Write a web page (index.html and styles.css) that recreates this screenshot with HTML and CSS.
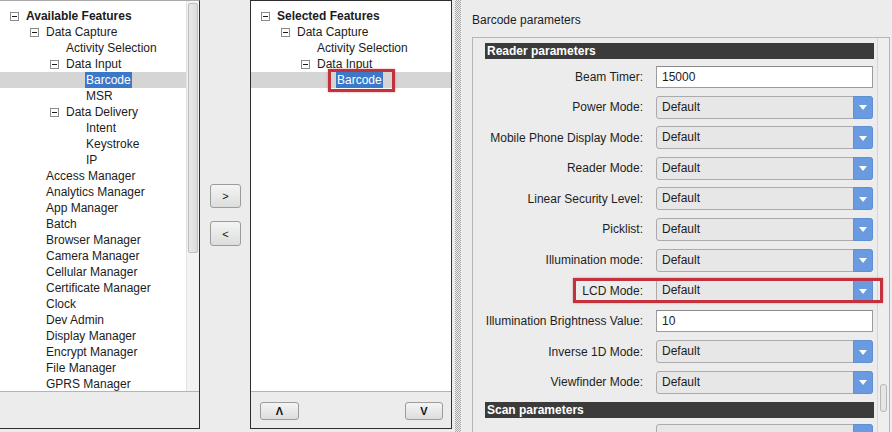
FILE: index.html
```html
<!DOCTYPE html>
<html>
<head>
<meta charset="utf-8">
<link rel="stylesheet" href="styles.css">
</head>
<body>
<div class="app">
  <div class="panel panel-left">
    <div class="tree-wrap">
      <div class="tree">
        <div class="node l0 bold"><svg class="exp" width="9" height="9" viewBox="0 0 9 9"><rect x="0.5" y="0.5" width="8" height="8" fill="#fff" stroke="#8a8a8a"/><path d="M2 4.5h5" stroke="#1a1a1a"/></svg><span class="label">Available Features</span></div>
        <div class="node l1"><svg class="exp" width="9" height="9" viewBox="0 0 9 9"><rect x="0.5" y="0.5" width="8" height="8" fill="#fff" stroke="#8a8a8a"/><path d="M2 4.5h5" stroke="#1a1a1a"/></svg><span class="label">Data Capture</span></div>
        <div class="node l2"><span class="exp"></span><span class="label">Activity Selection</span></div>
        <div class="node l2"><svg class="exp" width="9" height="9" viewBox="0 0 9 9"><rect x="0.5" y="0.5" width="8" height="8" fill="#fff" stroke="#8a8a8a"/><path d="M2 4.5h5" stroke="#1a1a1a"/></svg><span class="label">Data Input</span></div>
        <div class="node l3 sel"><span class="exp"></span><span class="label">Barcode</span></div>
        <div class="node l3"><span class="exp"></span><span class="label">MSR</span></div>
        <div class="node l2"><svg class="exp" width="9" height="9" viewBox="0 0 9 9"><rect x="0.5" y="0.5" width="8" height="8" fill="#fff" stroke="#8a8a8a"/><path d="M2 4.5h5" stroke="#1a1a1a"/></svg><span class="label">Data Delivery</span></div>
        <div class="node l3"><span class="exp"></span><span class="label">Intent</span></div>
        <div class="node l3"><span class="exp"></span><span class="label">Keystroke</span></div>
        <div class="node l3"><span class="exp"></span><span class="label">IP</span></div>
        <div class="node l1"><span class="exp"></span><span class="label">Access Manager</span></div>
        <div class="node l1"><span class="exp"></span><span class="label">Analytics Manager</span></div>
        <div class="node l1"><span class="exp"></span><span class="label">App Manager</span></div>
        <div class="node l1"><span class="exp"></span><span class="label">Batch</span></div>
        <div class="node l1"><span class="exp"></span><span class="label">Browser Manager</span></div>
        <div class="node l1"><span class="exp"></span><span class="label">Camera Manager</span></div>
        <div class="node l1"><span class="exp"></span><span class="label">Cellular Manager</span></div>
        <div class="node l1"><span class="exp"></span><span class="label">Certificate Manager</span></div>
        <div class="node l1"><span class="exp"></span><span class="label">Clock</span></div>
        <div class="node l1"><span class="exp"></span><span class="label">Dev Admin</span></div>
        <div class="node l1"><span class="exp"></span><span class="label">Display Manager</span></div>
        <div class="node l1"><span class="exp"></span><span class="label">Encrypt Manager</span></div>
        <div class="node l1"><span class="exp"></span><span class="label">File Manager</span></div>
        <div class="node l1"><span class="exp"></span><span class="label">GPRS Manager</span></div>
      </div>
      <div class="vscroll-left"><div class="thumb-left"></div></div>
    </div>
    <div class="panel-foot"></div>
  </div>

  <div class="gutter">
    <button class="btn arrow-btn">&gt;</button>
    <button class="btn arrow-btn tall">&lt;</button>
  </div>

  <div class="panel panel-mid">
    <div class="tree-wrap">
      <div class="tree">
        <div class="node l0 bold"><svg class="exp" width="9" height="9" viewBox="0 0 9 9"><rect x="0.5" y="0.5" width="8" height="8" fill="#fff" stroke="#8a8a8a"/><path d="M2 4.5h5" stroke="#1a1a1a"/></svg><span class="label">Selected Features</span></div>
        <div class="node l1"><svg class="exp" width="9" height="9" viewBox="0 0 9 9"><rect x="0.5" y="0.5" width="8" height="8" fill="#fff" stroke="#8a8a8a"/><path d="M2 4.5h5" stroke="#1a1a1a"/></svg><span class="label">Data Capture</span></div>
        <div class="node l2"><span class="exp"></span><span class="label">Activity Selection</span></div>
        <div class="node l2"><svg class="exp" width="9" height="9" viewBox="0 0 9 9"><rect x="0.5" y="0.5" width="8" height="8" fill="#fff" stroke="#8a8a8a"/><path d="M2 4.5h5" stroke="#1a1a1a"/></svg><span class="label">Data Input</span></div>
        <div class="node l3 sel"><span class="exp"></span><span class="label marked">Barcode</span></div>
      </div>
    </div>
    <div class="panel-foot mid-foot">
      <button class="btn move-btn up">&Lambda;</button>
      <button class="btn move-btn down">V</button>
    </div>
  </div>

  <div class="right">
    <div class="splitter"></div>
    <div class="right-content">
      <div class="title">Barcode parameters</div>
      <div class="scrollbox">
        <div class="scroll-content">
          <div class="section">Reader parameters</div>
          <div class="row"><span class="lbl">Beam Timer:</span><div class="input">15000</div></div>
          <div class="row"><span class="lbl">Power Mode:</span><div class="select"><span class="val">Default</span><span class="drop"><svg width="8" height="5" viewBox="0 0 8 5"><path d="M0 0h8L4 5z" fill="#fff"/></svg></span></div></div>
          <div class="row"><span class="lbl">Mobile Phone Display Mode:</span><div class="select"><span class="val">Default</span><span class="drop"><svg width="8" height="5" viewBox="0 0 8 5"><path d="M0 0h8L4 5z" fill="#fff"/></svg></span></div></div>
          <div class="row"><span class="lbl">Reader Mode:</span><div class="select"><span class="val">Default</span><span class="drop"><svg width="8" height="5" viewBox="0 0 8 5"><path d="M0 0h8L4 5z" fill="#fff"/></svg></span></div></div>
          <div class="row"><span class="lbl">Linear Security Level:</span><div class="select"><span class="val">Default</span><span class="drop"><svg width="8" height="5" viewBox="0 0 8 5"><path d="M0 0h8L4 5z" fill="#fff"/></svg></span></div></div>
          <div class="row"><span class="lbl">Picklist:</span><div class="select"><span class="val">Default</span><span class="drop"><svg width="8" height="5" viewBox="0 0 8 5"><path d="M0 0h8L4 5z" fill="#fff"/></svg></span></div></div>
          <div class="row"><span class="lbl">Illumination mode:</span><div class="select"><span class="val">Default</span><span class="drop"><svg width="8" height="5" viewBox="0 0 8 5"><path d="M0 0h8L4 5z" fill="#fff"/></svg></span></div></div>
          <div class="row marked-row"><span class="lbl">LCD Mode:</span><div class="select"><span class="val">Default</span><span class="drop"><svg width="8" height="5" viewBox="0 0 8 5"><path d="M0 0h8L4 5z" fill="#fff"/></svg></span></div></div>
          <div class="row"><span class="lbl">Illumination Brightness Value:</span><div class="input">10</div></div>
          <div class="row"><span class="lbl">Inverse 1D Mode:</span><div class="select"><span class="val">Default</span><span class="drop"><svg width="8" height="5" viewBox="0 0 8 5"><path d="M0 0h8L4 5z" fill="#fff"/></svg></span></div></div>
          <div class="row"><span class="lbl">Viewfinder Mode:</span><div class="select"><span class="val">Default</span><span class="drop"><svg width="8" height="5" viewBox="0 0 8 5"><path d="M0 0h8L4 5z" fill="#fff"/></svg></span></div></div>
          <div class="section">Scan parameters</div>
          <div class="row"><span class="lbl"></span><div class="select"><span class="val"></span><span class="drop"><svg width="8" height="5" viewBox="0 0 8 5"><path d="M0 0h8L4 5z" fill="#fff"/></svg></span></div></div>
        </div>
        <div class="vscroll"><div class="thumb"></div></div>
      </div>
    </div>
  </div>
</div>
</body>
</html>
```
FILE: styles.css
```css
html, body {
  margin: 0;
  padding: 0;
}
body {
  width: 892px;
  height: 432px;
  overflow: hidden;
  background: #ececec;
  font-family: "Liberation Sans", Arial, sans-serif;
  font-size: 12px;
  color: #1c1c1c;
}
.app {
  display: flex;
  height: 432px;
  align-items: flex-start;
}

/* panels */
.panel {
  height: 429px;
  box-sizing: border-box;
  display: flex;
  flex-direction: column;
  flex: none;
}
.panel-left {
  width: 200px;
  border-top: 1px solid #a9a9a9;
  border-right: 1px solid #2e2e2e;
  border-bottom: 1px solid #2e2e2e;
}
.panel-mid {
  width: 202px;
  border: 1px solid #2e2e2e;
}
.tree-wrap {
  height: 391px;
  box-sizing: border-box;
  background: #fff;
  border-bottom: 1px solid #b4b4b4;
  display: flex;
  overflow: hidden;
}
.tree {
  flex: 1;
  padding-top: 7px;
  overflow: hidden;
}
.panel-foot {
  flex: 1;
  background: #ececec;
}

/* tree nodes */
.node {
  height: 16px;
  line-height: 16px;
  display: flex;
  align-items: center;
  white-space: nowrap;
}
.node .label {
  padding-top: 1px;
  line-height: 15px;
}
.node.l0 { padding-left: 10px; }
.node.l1 { padding-left: 30px; }
.node.l2 { padding-left: 50px; }
.node.l3 { padding-left: 70px; }
.node.bold { font-weight: bold; }
.exp {
  width: 9px;
  height: 9px;
  margin-right: 7px;
  flex: none;
  display: block;
}
.node.sel {
  background: #d5d5d5;
}
.node.sel .label {
  background: #3b78c8;
  color: #fff;
  margin-left: -1px;
  padding: 1px 1px 0 1px;
  line-height: 15px;
}
.label.marked {
  position: relative;
}
.label.marked::after {
  content: "";
  position: absolute;
  top: -3px;
  bottom: -4px;
  left: -8px;
  right: -12px;
  border: 3px solid #c3323c;
  box-shadow: 0 0 2px rgba(200, 60, 70, 0.5);
}

/* left scrollbar */
.vscroll-left {
  width: 13px;
  flex: none;
  background: #f3f3f3;
  border-left: 1px solid #e2e2e2;
  box-sizing: border-box;
  padding-top: 2px;
}
.thumb-left {
  height: 250px;
  margin: 0 1px 0 1px;
  box-sizing: border-box;
  border: 1px solid #bdbdbd;
  border-radius: 2px;
  background: linear-gradient(to right, #e9e9e9, #dcdcdc);
}

/* buttons */
.btn {
  font-family: "Liberation Sans", Arial, sans-serif;
  box-sizing: border-box;
  border: 1px solid #9c9c9c;
  border-radius: 3px;
  background: linear-gradient(to bottom, #f4f4f4, #dddddd);
  color: #111;
  padding: 0;
  display: flex;
  align-items: center;
  justify-content: center;
}
.gutter {
  width: 50px;
  flex: none;
  box-sizing: border-box;
  padding: 184px 0 0 10px;
  display: flex;
  flex-direction: column;
  gap: 13px;
}
.arrow-btn {
  width: 31px;
  height: 24px;
  font-size: 11px;
}
.arrow-btn.tall {
  height: 25px;
}
.mid-foot {
  display: flex;
  justify-content: space-between;
  align-items: flex-start;
  padding: 10px 8px 0 9px;
}
.move-btn {
  height: 18px;
  font-size: 11px;
  font-weight: bold;
}
.move-btn.up { width: 39px; }
.move-btn.down { width: 38px; }

/* right side */
.right {
  flex: 1;
  display: flex;
  height: 432px;
}
.splitter {
  width: 6px;
  margin-left: 3px;
  flex: none;
  background: repeating-conic-gradient(#a9a9a9 0 25%, #ececec 0 50%) 0 0 / 2px 2px;
}
.right-content {
  flex: 1;
  padding: 12px 2px 0 11px;
  display: flex;
  flex-direction: column;
  min-width: 0;
}
.title {
  line-height: 16px;
  margin-bottom: 9px;
  color: #1c1c1c;
}
.scrollbox {
  flex: 1;
  display: flex;
  border: 1px solid #b6b6b6;
  border-bottom: 0;
  min-height: 0;
}
.scroll-content {
  flex: 1;
  padding-top: 5px;
  display: flex;
  flex-direction: column;
  gap: 7.6px;
  min-width: 0;
}
.section {
  height: 16px;
  line-height: 16px;
  margin: 0 3px -1.6px 12px;
  padding-left: 2px;
  background: #3b3b3b;
  color: #fff;
  font-weight: bold;
  flex: none;
}
.row {
  height: 23px;
  flex: none;
  display: grid;
  grid-template-columns: 170px 217px;
  column-gap: 13px;
  align-items: center;
}
.lbl {
  text-align: right;
  white-space: nowrap;
  color: #1e1e1e;
}
.input {
  height: 22px;
  box-sizing: border-box;
  background: #fff;
  border: 1px solid #9b9b9b;
  border-top-color: #8a8a8a;
  padding-left: 5px;
  line-height: 20px;
}
.select {
  height: 23px;
  box-sizing: border-box;
  border: 1px solid #ababab;
  border-radius: 3px;
  background: #e7e7e7;
  display: flex;
  align-items: stretch;
}
.select .val {
  flex: 1;
  padding-left: 5px;
  line-height: 21px;
}
.select .drop {
  width: 20px;
  margin: -1px -1px -1px 0;
  box-sizing: border-box;
  background: #6a9adf;
  border: 1px solid #5f8fd4;
  border-radius: 0 3px 3px 0;
  display: flex;
  align-items: center;
  justify-content: center;
}
.select .drop svg {
  display: block;
  margin-top: 1px;
}
.marked-row {
  position: relative;
}
.marked-row::after {
  content: "";
  position: absolute;
  top: -1px;
  bottom: -1px;
  left: 100px;
  right: -6px;
  border: 3px solid #c3323c;
  box-shadow: 0 0 2px rgba(200, 60, 70, 0.5);
}
.vscroll {
  width: 12px;
  flex: none;
  box-sizing: border-box;
  border-left: 1px solid #d6d6d6;
  background: #eeeeee;
  padding-top: 346px;
}
.thumb {
  width: 7px;
  height: 28px;
  margin-left: 2px;
  box-sizing: border-box;
  border: 1px solid #b7b7b7;
  border-radius: 3px;
  background: #e5e5e5;
}
```
